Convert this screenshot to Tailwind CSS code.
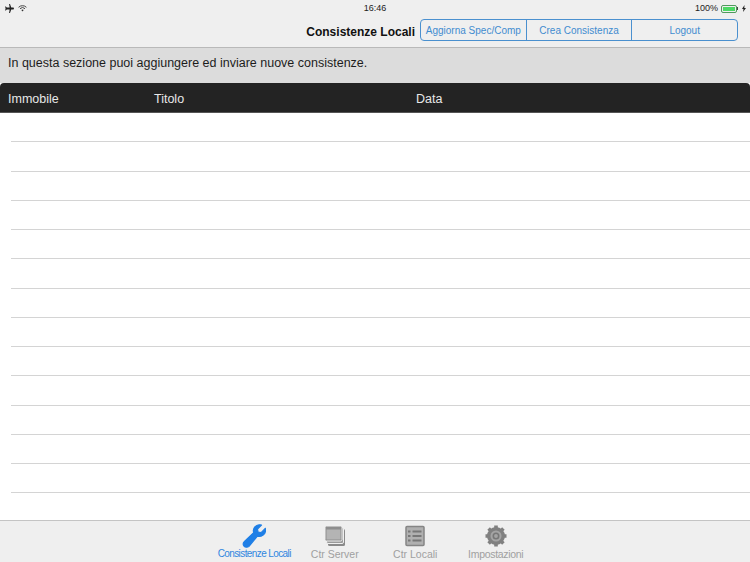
<!DOCTYPE html>
<html lang="en">
  <head>
    <meta charset="UTF-8" />
    <script src="https://cdn.jsdelivr.net/npm/@tailwindcss/browser@4"></script>
    <title>Consistenze Locali</title>
  </head>
  <body class="w-[750px] h-[562px] overflow-hidden bg-white font-['Liberation_Sans',Arial,sans-serif] flex flex-col">
    <!-- top bar -->
    <header class="h-[48px] shrink-0 bg-[#efefef] border-b border-[#b9b9b9] flex flex-col">
      <div class="h-[17px] shrink-0 grid grid-cols-3 items-center pl-[4px] pr-[4px] text-[9px] font-medium text-[#222]">
        <div class="flex items-center gap-[4px]">
          <svg width="10" height="9" viewBox="0 0 11 10" fill="#222"><path d="M5.600 0h1L8 4h2.200c.5 0 .8.4.8 1s-.3 1-.8 1H8L6.600 10h-1l.6-4H3L2 7.200H1.200L1.700 5 1.200 2.800H2L3 4h3.200z"/></svg>
          <svg width="9" height="7" viewBox="0 0 9 7" fill="none" stroke="#444"><path d="M.6 2.300a5.500 5.500 0 0 1 7.800 0" /><path d="M2 3.700a3.500 3.500 0 0 1 5 0" /><path d="M4.500 6.500 3.300 5a1.700 1.700 0 0 1 2.400 0z" fill="#333" stroke="none"/></svg>
        </div>
        <div class="text-center">16:46</div>
        <div class="flex items-center justify-end gap-[2px]">
          <span class="mr-[1px]">100%</span>
          <div class="flex items-center">
            <div class="w-[16px] h-[8px] border border-[#4f9a5c] rounded-[2px] p-[1px] flex"><div class="flex-1 bg-[#4cd964]"></div></div>
            <div class="w-[1px] h-[3px] bg-[#444]"></div>
          </div>
          <svg class="ml-[2px]" width="4" height="7" viewBox="0 0 4 7" fill="#222"><path d="M2.500 0 0 4h1.500L1 7l3-4H2.300z"/></svg>
        </div>
      </div>
      <div class="flex-1 flex items-start justify-end pt-[2px] pr-[12px]">
        <h1 class="text-[12px] leading-[26px] font-bold text-[#111] mr-[5px]">Consistenze Locali</h1>
        <div class="flex h-[22px] w-[318px] border border-[#4a90cf] rounded-[4px] text-[10px] text-[#3f8ccf]">
          <div class="flex-1 flex items-center justify-center border-r border-[#4a90cf]">Aggiorna Spec/Comp</div>
          <div class="flex-1 flex items-center justify-center border-r border-[#4a90cf]">Crea Consistenza</div>
          <div class="flex-1 flex items-center justify-center">Logout</div>
        </div>
      </div>
    </header>

    <!-- intro -->
    <div class="h-[35px] shrink-0 bg-[#dcdcdc] px-[8px] pt-[7px] text-[12.500px] leading-[17px] text-[#1c1c1c]">
      In questa sezione puoi aggiungere ed inviare nuove consistenze.
    </div>

    <!-- table -->
    <div class="h-[30px] shrink-0 bg-[#232323] rounded-t-[4px] border-b border-[#555] flex items-center px-[8px] pt-[3px] text-[12.500px] text-[#e8e8e8]">
      <div class="w-[146px]">Immobile</div>
      <div class="w-[262px]">Titolo</div>
      <div>Data</div>
    </div>
    <div class="flex-1 bg-white">
      <div class="h-[29.250px] ml-[11px] border-b border-[#d4d4d4]"></div>
      <div class="h-[29.250px] ml-[11px] border-b border-[#d4d4d4]"></div>
      <div class="h-[29.250px] ml-[11px] border-b border-[#d4d4d4]"></div>
      <div class="h-[29.250px] ml-[11px] border-b border-[#d4d4d4]"></div>
      <div class="h-[29.250px] ml-[11px] border-b border-[#d4d4d4]"></div>
      <div class="h-[29.250px] ml-[11px] border-b border-[#d4d4d4]"></div>
      <div class="h-[29.250px] ml-[11px] border-b border-[#d4d4d4]"></div>
      <div class="h-[29.250px] ml-[11px] border-b border-[#d4d4d4]"></div>
      <div class="h-[29.250px] ml-[11px] border-b border-[#d4d4d4]"></div>
      <div class="h-[29.250px] ml-[11px] border-b border-[#d4d4d4]"></div>
      <div class="h-[29.250px] ml-[11px] border-b border-[#d4d4d4]"></div>
      <div class="h-[29.250px] ml-[11px] border-b border-[#d4d4d4]"></div>
      <div class="h-[29.250px] ml-[11px] border-b border-[#d4d4d4]"></div>
    </div>

    <!-- tab bar -->
    <nav class="h-[42px] shrink-0 bg-[#efefef] border-t border-[#c4c4c4] flex justify-center text-[10.500px] leading-[12px] text-[#a0a0a0]">
      <div class="w-[80.500px] flex flex-col items-center pt-[3px] text-[#2f86e0]">
        <svg width="24" height="24" viewBox="0 0 24 24" fill="#1f7fe6" stroke="#1f7fe6" stroke-width="1.200" stroke-linejoin="round"><path d="M23.300 4.300c.6 2.600-.1 5-1.900 6.600-1.700 1.500-3.900 1.900-6 1.200L7 22.300c-1.300 1.300-3.800 1.300-5-.1-1.200-1.300-1.100-3.200.2-4.400l9.500-9.200c-.7-2.100-.2-4.400 1.400-6C14.800 1.100 17.100.4 19.500 1l-4 4 .6 3 3 .7z"/></svg>
        <span class="text-[10px] tracking-[-0.6px]">Consistenze Locali</span>
      </div>
      <div class="w-[80.500px] flex flex-col items-center pt-[3px]">
        <svg width="24" height="24" viewBox="0 0 24 24"><rect x="5" y="5" width="17" height="17" rx="1.500" fill="#8a8a8a"/><rect x="3.500" y="3.500" width="17" height="16" rx="1.500" fill="#9a9a9a" stroke="#efefef"/><rect x="2" y="2" width="17" height="15" rx="1.500" fill="#8e8e8e" stroke="#efefef"/><rect x="3.500" y="5.500" width="14" height="10" fill="#b4b4b4"/></svg>
        <span>Ctr Server</span>
      </div>
      <div class="w-[80.500px] flex flex-col items-center pt-[3px]">
        <svg width="24" height="24" viewBox="0 0 24 24"><rect x="3" y="2.500" width="18" height="19" rx="1" fill="#b0b0b0" stroke="#858585" stroke-width="1.500"/><path d="M9.500 7.500h9M9.500 12h9M9.500 16.500h9M5 7.500h2.500M5 12h2.500M5 16.500h2.500" stroke="#777" stroke-width="2"/></svg>
        <span>Ctr Locali</span>
      </div>
      <div class="w-[80.500px] flex flex-col items-center pt-[3px]">
        <svg width="24" height="24" viewBox="0 0 24 24"><circle cx="12" cy="12" r="6.500" fill="none" stroke="#808080" stroke-width="5"/><path d="M12 1.500v21M1.500 12h21M4.600 4.600l14.800 14.800M19.400 4.600 4.600 19.400" stroke="#808080" stroke-width="3.600"/><circle cx="12" cy="12" r="5.500" fill="#a4a4a4"/><circle cx="12" cy="12" r="2.700" fill="none" stroke="#777" stroke-width="1.600"/></svg>
        <span class="tracking-[-0.3px]">Impostazioni</span>
      </div>
    </nav>
  </body>
</html>
